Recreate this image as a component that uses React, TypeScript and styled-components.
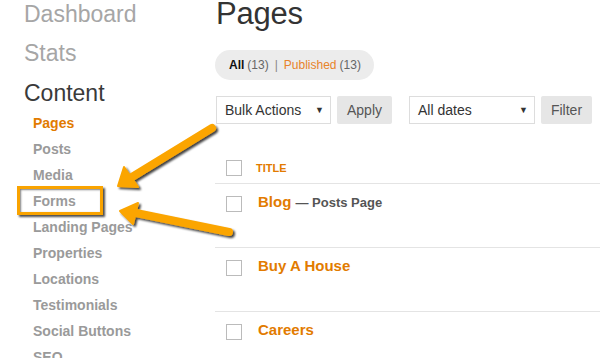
import React from 'react'
import styled, { createGlobalStyle } from 'styled-components'

const GlobalStyle = createGlobalStyle`
  html, body {
    margin: 0;
    padding: 0;
    background: #fff;
    overflow: hidden;
  }
  body {
    font-family: "Liberation Sans", Arial, sans-serif;
  }
`

const Page = styled.div`
  position: relative;
  width: 600px;
  height: 358px;
  display: flex;
  align-items: flex-start;
  overflow: hidden;
`

const Sidebar = styled.nav`
  width: 215px;
  flex-shrink: 0;
  padding: 0 0 0 24px;
  box-sizing: border-box;
`

const TopLink = styled.div<{ $active?: boolean }>`
  font-size: 23px;
  line-height: 28px;
  height: ${(p) => (p.$active ? '28px' : '39px')};
  color: ${(p) => (p.$active ? '#3a3a3a' : '#a6a6a6')};
  margin-top: ${(p) => (p.$active ? '1px' : '0')};
`

const SubList = styled.ul`
  list-style: none;
  margin: 0;
  padding: 3px 0 0 9px;
`

const SubItem = styled.li<{ $active?: boolean; $boxed?: boolean }>`
  position: relative;
  font-size: 14px;
  font-weight: bold;
  line-height: 26px;
  color: ${(p) => (p.$active ? '#e27b00' : '#9a9a9a')};

  ${(p) =>
    p.$boxed &&
    `
    &::before {
      content: '';
      position: absolute;
      left: -16px;
      top: -2px;
      width: 80px;
      height: 23px;
      border: 3px solid #f9a300;
      box-shadow: 2px 2px 2px rgba(0, 0, 0, 0.7), inset 1px 1px 2px rgba(0,0,0,0.5);
    }
  `}
`

const Main = styled.main`
  flex: 1;
  display: flex;
  flex-direction: column;

  & > * {
    flex-shrink: 0;
  }
`

const Title = styled.h1`
  margin: -1px 0 0;
  padding-left: 1px;
  font-size: 31px;
  font-weight: normal;
  line-height: 30px;
  color: #333;
  height: 51px;
  letter-spacing: -0.2px;
`

const Pill = styled.div`
  align-self: flex-start;
  display: flex;
  align-items: center;
  height: 30px;
  padding: 0 13px 0 14px;
  border-radius: 15px;
  background: #ececec;
  font-size: 12px;
  color: #666;
`

const Strong = styled.b`
  color: #111;
  margin-right: 3px;
`

const Sep = styled.span`
  color: #888;
  margin: 0 6px;
`

const OrangeText = styled.span`
  color: #e8832a;
  margin-right: 3px;
`

const Toolbar = styled.div`
  display: flex;
  align-items: center;
  margin-top: 16px;
  height: 28px;
  padding-left: 1px;
`

const Select = styled.div<{ $w: number; $gap?: number }>`
  width: ${(p) => p.$w}px;
  height: 28px;
  box-sizing: border-box;
  border: 1px solid #ddd;
  display: flex;
  align-items: center;
  justify-content: space-between;
  padding: 0 6px 0 8px;
  font-size: 14px;
  color: #333;
  margin-left: ${(p) => p.$gap || 0}px;
`

const Caret = styled.span`
  font-size: 9px;
  color: #333;
`

const Button = styled.div<{ $w: number; $gap: number }>`
  width: ${(p) => p.$w}px;
  height: 28px;
  margin-left: ${(p) => p.$gap}px;
  background: #e6e6e6;
  border-radius: 2px;
  display: flex;
  align-items: center;
  justify-content: center;
  font-size: 14px;
  color: #555;
`

const Table = styled.div`
  margin-top: 36px;
`

const Row = styled.div<{ $head?: boolean }>`
  display: flex;
  align-items: flex-start;
  height: ${(p) => (p.$head ? '23px' : '51px')};
  padding-top: ${(p) => (p.$head ? '0' : '12px')};
  border-bottom: 1px solid #e4e4e4;
  padding-left: 11px;
`

const Check = styled.span`
  width: 16px;
  height: 16px;
  box-sizing: border-box;
  border: 1.5px solid #bbb;
  flex-shrink: 0;
`

const HeadLabel = styled.span`
  margin-left: 14px;
  font-size: 11px;
  font-weight: bold;
  line-height: 16px;
  color: #e27b00;
`

const RowTitle = styled.span`
  margin: -2px 0 0 16px;
  font-size: 15px;
  font-weight: bold;
  line-height: 16px;
  color: #e27b00;
`

const RowNote = styled.span`
  font-size: 13px;
  color: #555;
`

const Overlay = styled.svg`
  position: absolute;
  left: 0;
  top: 0;
  pointer-events: none;
`

const sub = [
  'Pages',
  'Posts',
  'Media',
  'Forms',
  'Landing Pages',
  'Properties',
  'Locations',
  'Testimonials',
  'Social Buttons',
  'SEO',
]

export default function App() {
  return (
    <>
      <GlobalStyle />
      <Page>
        <Sidebar>
          <TopLink>Dashboard</TopLink>
          <TopLink>Stats</TopLink>
          <TopLink $active>Content</TopLink>
          <SubList>
            {sub.map((s, i) => (
              <SubItem key={s} $active={i === 0} $boxed={s === 'Forms'}>
                {s}
              </SubItem>
            ))}
          </SubList>
        </Sidebar>
        <Main>
          <Title>Pages</Title>
          <Pill>
            <Strong>All</Strong>(13)
            <Sep>|</Sep>
            <OrangeText>Published</OrangeText>(13)
          </Pill>
          <Toolbar>
            <Select $w={115}>
              Bulk Actions <Caret>▼</Caret>
            </Select>
            <Button $w={55} $gap={6}>Apply</Button>
            <Select $w={126} $gap={17}>
              All dates <Caret>▼</Caret>
            </Select>
            <Button $w={51} $gap={6}>Filter</Button>
          </Toolbar>
          <Table>
            <Row $head>
              <Check />
              <HeadLabel>TITLE</HeadLabel>
            </Row>
            <Row>
              <Check />
              <RowTitle>
                Blog <RowNote>— Posts Page</RowNote>
              </RowTitle>
            </Row>
            <Row>
              <Check />
              <RowTitle>Buy A House</RowTitle>
            </Row>
            <Row>
              <Check />
              <RowTitle>Careers</RowTitle>
            </Row>
          </Table>
        </Main>
        <Overlay width="600" height="358" viewBox="0 0 600 358">
          <defs>
            <filter id="sh" x="-20%" y="-20%" width="140%" height="140%">
              <feDropShadow dx="2" dy="2" stdDeviation="1.2" floodColor="#000" floodOpacity="0.75" />
            </filter>
          </defs>
          <g filter="url(#sh)" fill="#fba500" stroke="#fba500">
            <line x1="212" y1="128" x2="132" y2="177" strokeWidth="8" strokeLinecap="round" />
            <polygon points="118,186 124,167 138,187" strokeWidth="2" strokeLinejoin="round" />
            <line x1="229" y1="232" x2="136" y2="213" strokeWidth="8" strokeLinecap="round" />
            <polygon points="120,211 138,203 133,224" strokeWidth="2" strokeLinejoin="round" />
          </g>
        </Overlay>
      </Page>
    </>
  )
}
